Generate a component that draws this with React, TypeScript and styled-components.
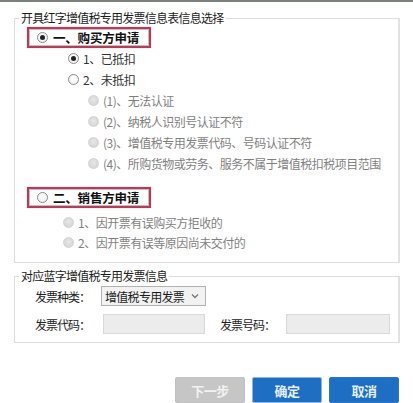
import React from 'react'
import styled, { createGlobalStyle } from 'styled-components'

const GlobalStyle = createGlobalStyle`
  html, body {
    margin: 0;
    padding: 0;
    background: #fff;
  }
  body {
    font-family: "Noto Sans CJK SC", "Noto Sans", sans-serif;
    color: #222;
  }
  * {
    box-sizing: border-box;
  }
`

const buyerOptions = [
  { label: '1、已抵扣', checked: true, level: 1 },
  { label: '2、未抵扣', checked: false, level: 1 },
  { label: '(1)、无法认证', level: 2, disabled: true },
  { label: '(2)、纳税人识别号认证不符', level: 2, disabled: true },
  { label: '(3)、增值税专用发票代码、号码认证不符', level: 2, disabled: true },
  { label: '(4)、所购货物或劳务、服务不属于增值税扣税项目范围', level: 2, disabled: true },
]

const sellerOptions = [
  '1、因开票有误购买方拒收的',
  '2、因开票有误等原因尚未交付的',
]

export default function App() {
  return (
    <>
      <GlobalStyle />
      <Page>
        <Group $pt={1} $pb={10}>
          <Legend>开具红字增值税专用发票信息表信息选择</Legend>
          <SectionBox>
            <Radio $checked />
            <span>一、购买方申请</span>
          </SectionBox>
          {buyerOptions.map((o) => (
            <Option
              key={o.label}
              $indent={o.level === 1 ? 41 : 61}
              $h={21}
              $muted={o.disabled}
            >
              <Radio $checked={o.checked} $disabled={o.disabled} />
              <span>{o.label}</span>
            </Option>
          ))}
          <SectionBox $mt={13}>
            <Radio />
            <span>二、销售方申请</span>
          </SectionBox>
          <SubList>
            {sellerOptions.map((label) => (
              <Option key={label} $indent={36} $h={20} $muted>
                <Radio $disabled />
                <span>{label}</span>
              </Option>
            ))}
          </SubList>
        </Group>

        <Group $pt={2} $pb={8} $mt={5}>
          <Legend>对应蓝字增值税专用发票信息</Legend>
          <FieldRow>
            <FieldLabel $w={66}>发票种类：</FieldLabel>
            <SelectBox>
              <span>增值税专用发票</span>
              <svg width="8" height="6" viewBox="0 0 8 6">
                <path d="M1 1.5 L4 4.5 L7 1.5" fill="none" stroke="#777" strokeWidth="1.3" />
              </svg>
            </SelectBox>
          </FieldRow>
          <FieldRow $mt={8}>
            <FieldLabel $w={68}>发票代码：</FieldLabel>
            <TextBox $w={102} />
            <FieldLabel $w={66} $ml={15}>发票号码：</FieldLabel>
            <TextBox $w={104} />
          </FieldRow>
        </Group>

        <Footer>
          <Button $variant="disabled" disabled>下一步</Button>
          <Button $variant="primary" $light>确定</Button>
          <Button $variant="primary">取消</Button>
        </Footer>
      </Page>
    </>
  )
}

const Page = styled.div`
  width: 413px;
  height: 403px;
  overflow: hidden;
  border-top: 2px solid #7b817b;
  padding: 8px 13px 0 14px;
`

const Group = styled.fieldset<{ $pt: number; $pb: number; $mt?: number }>`
  margin: ${(p) => p.$mt || 0}px 0 0 0;
  padding: ${(p) => p.$pt}px 0 ${(p) => p.$pb}px 12px;
  border: 1px solid #dddddd;
  border-right: 2px solid #e2e2e2;
  min-width: 0;
`

const Legend = styled.legend`
  margin-left: -8px;
  padding: 0 2px;
  font-size: 12px;
  line-height: 16px;
  letter-spacing: -0.75px;
  color: #1c1c1c;
`

const SectionBox = styled.div<{ $mt?: number }>`
  display: flex;
  align-items: center;
  gap: 5px;
  width: 124px;
  height: 21px;
  margin-top: ${(p) => p.$mt || 0}px;
  padding-left: 8px;
  border: 2px solid #ad3f59;
  box-shadow: inset 0 0 0 1px #e3b3bd, 0 0 1px #d58e9d;
  font-size: 12.5px;
  font-weight: 700;
  letter-spacing: -0.2px;
  color: #111;
`

const SubList = styled.div`
  margin-top: 4px;
`

const Option = styled.div<{ $indent: number; $h: number; $muted?: boolean }>`
  display: flex;
  align-items: center;
  gap: 4px;
  height: ${(p) => p.$h}px;
  padding-left: ${(p) => p.$indent}px;
  font-size: 12px;
  letter-spacing: -0.5px;
  white-space: nowrap;
  color: ${(p) => (p.$muted ? '#7f7f7f' : '#333')};
`

const Radio = styled.span<{ $checked?: boolean; $disabled?: boolean }>`
  position: relative;
  flex: none;
  width: 11px;
  height: 11px;
  border-radius: 50%;
  border: 1px solid ${(p) => (p.$disabled ? '#d3d3d3' : '#8c8c8c')};
  background: ${(p) =>
    p.$disabled
      ? 'radial-gradient(circle at 50% 40%, #e6e6e6, #d2d2d2)'
      : 'radial-gradient(circle at 50% 40%, #ffffff, #ececec)'};

  &::after {
    content: '';
    display: ${(p) => (p.$checked ? 'block' : 'none')};
    position: absolute;
    left: 2px;
    top: 2px;
    width: 5px;
    height: 5px;
    border-radius: 50%;
    background: #222;
  }
`

const FieldRow = styled.div<{ $mt?: number }>`
  display: flex;
  align-items: center;
  height: 20px;
  margin-top: ${(p) => p.$mt || 0}px;
  padding-left: 8px;
`

const FieldLabel = styled.span<{ $w: number; $ml?: number }>`
  flex: none;
  width: ${(p) => p.$w}px;
  margin-left: ${(p) => p.$ml || 0}px;
  font-size: 12px;
  letter-spacing: -1px;
  color: #222;
`

const SelectBox = styled.div`
  display: flex;
  align-items: center;
  justify-content: space-between;
  width: 105px;
  height: 20px;
  padding: 0 6px 0 3px;
  border: 1px solid #b3b3b3;
  background: #f2f2f2;
  font-size: 12px;
  letter-spacing: -0.7px;
  color: #1a1a1a;
`

const TextBox = styled.div<{ $w: number }>`
  flex: none;
  width: ${(p) => p.$w}px;
  height: 20px;
  border: 1px solid #d9d9d9;
  background: #ececec;
`

const Footer = styled.div`
  display: flex;
  justify-content: flex-end;
  gap: 7px;
  margin-top: 34px;
  padding-right: 1px;
`

const Button = styled.button<{ $variant: 'disabled' | 'primary'; $light?: boolean }>`
  width: 70px;
  height: 26px;
  padding: 0;
  border-radius: 2px;
  font-family: "Noto Sans CJK SC", "Noto Sans", sans-serif;
  font-size: 13px;
  font-weight: 700;
  letter-spacing: -0.5px;
  border: 1px solid
    ${(p) => (p.$variant === 'disabled' ? '#c2c2c2' : p.$light ? '#8db6e3' : '#2a78c8')};
  background: ${(p) => (p.$variant === 'disabled' ? '#c6c6c6' : '#1e6fc3')};
  color: ${(p) => (p.$variant === 'disabled' ? '#f2f2f2' : '#e4efff')};
`
